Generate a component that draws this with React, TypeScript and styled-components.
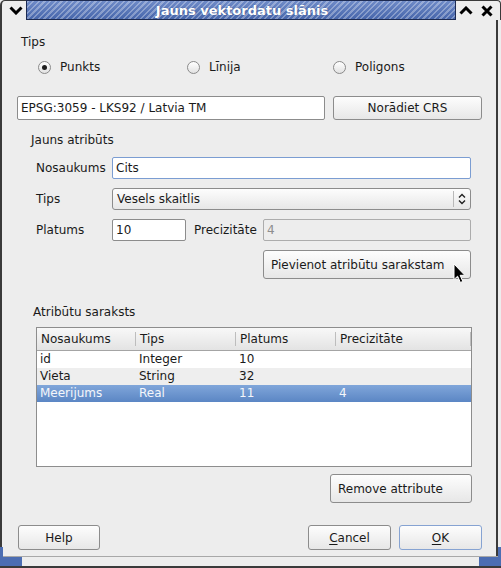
import styled, { createGlobalStyle } from "styled-components";

const GlobalStyle = createGlobalStyle`
  html, body {
    margin: 0;
    padding: 0;
    background: #ededed;
  }
  body {
    font-family: "DejaVu Sans", "Liberation Sans", sans-serif;
    font-size: 12px;
    color: #1a1a1a;
  }
  * {
    box-sizing: border-box;
  }
`;

const columns = ["Nosaukums", "Tips", "Platums", "Precizitāte"];

const attributes = [
  { name: "id", type: "Integer", width: "10", precision: "" },
  { name: "Vieta", type: "String", width: "32", precision: "" },
  { name: "Meerijums", type: "Real", width: "11", precision: "4" },
];

function App() {
  return (
    <>
      <GlobalStyle />
      <Window>
        <TitleBar>
          <MenuButton>
            <svg width="14" height="9" viewBox="0 0 14 9">
              <polyline points="1.5,1.5 7,7 12.5,1.5" fill="none" stroke="#000" strokeWidth="3" />
            </svg>
          </MenuButton>
          <TitleArea>Jauns vektordatu slānis</TitleArea>
          <TitleControls>
            <svg width="14" height="9" viewBox="0 0 14 9">
              <polyline points="1.5,7.5 7,2 12.5,7.5" fill="none" stroke="#000" strokeWidth="3" />
            </svg>
            <svg width="12" height="12" viewBox="0 0 12 12">
              <path d="M1.5 1.5 L10.5 10.5 M10.5 1.5 L1.5 10.5" stroke="#000" strokeWidth="3" />
            </svg>
          </TitleControls>
        </TitleBar>

        <Body>
          <SectionLabel $indent={4}>Tips</SectionLabel>
          <RadioRow>
            <RadioOption>
              <Radio $checked />
              Punkts
            </RadioOption>
            <RadioOption>
              <Radio />
              Līnija
            </RadioOption>
            <RadioOption>
              <Radio />
              Poligons
            </RadioOption>
          </RadioRow>

          <CrsRow>
            <CrsField readOnly value="EPSG:3059 - LKS92 / Latvia TM" />
            <Button $width={149}>Norādiet CRS</Button>
          </CrsRow>

          <Group>
            <SectionLabel $indent={14}>Jauns atribūts</SectionLabel>
            <Form>
              <FormRow>
                <FieldLabel>Nosaukums</FieldLabel>
                <TextInput readOnly value="Cits" $focused />
              </FormRow>
              <FormRow>
                <FieldLabel>Tips</FieldLabel>
                <Combo>
                  <ComboText>Vesels skaitlis</ComboText>
                  <ComboArrow>
                    <svg width="8" height="12" viewBox="0 0 8 12">
                      <polyline points="1,4.5 4,1.5 7,4.5" fill="none" stroke="#222" strokeWidth="1.4" />
                      <polyline points="1,7.5 4,10.5 7,7.5" fill="none" stroke="#222" strokeWidth="1.4" />
                    </svg>
                  </ComboArrow>
                </Combo>
              </FormRow>
              <FormRow>
                <FieldLabel>Platums</FieldLabel>
                <TextInput readOnly value="10" $width={74} />
                <InlineLabel>Precizitāte</InlineLabel>
                <TextInput readOnly value="4" disabled />
              </FormRow>
              <ActionRow>
                <Button $align="left" $width={208} $height={29}>
                  Pievienot atribūtu sarakstam
                </Button>
                <Cursor width="13" height="21" viewBox="0 0 13 21">
                  <path
                    d="M1 1 L1 16.5 L4.6 13.2 L7.4 19.5 L9.8 18.4 L7.1 12.3 L11.8 12.3 Z"
                    fill="#000"
                    stroke="#fff"
                    strokeWidth="1"
                    strokeLinejoin="round"
                  />
                </Cursor>
              </ActionRow>
            </Form>
          </Group>

          <Group $top={26}>
            <SectionLabel $indent={16}>Atribūtu saraksts</SectionLabel>
            <Tree>
              <TreeHeader>
                {columns.map((c) => (
                  <HeaderCell key={c}>{c}</HeaderCell>
                ))}
              </TreeHeader>
              {attributes.map((a, i) => (
                <TreeRow key={a.name} $alt={i % 2 === 1} $selected={i === 2}>
                  <Cell>{a.name}</Cell>
                  <Cell>{a.type}</Cell>
                  <Cell>{a.width}</Cell>
                  <Cell>{a.precision}</Cell>
                </TreeRow>
              ))}
            </Tree>
            <RemoveRow>
              <Button $align="left" $width={142} $height={29}>
                Remove attribute
              </Button>
            </RemoveRow>
          </Group>

          <DialogButtons>
            <Button $width={82}>Help</Button>
            <Spacer />
            <Button $width={83}>
              <u>C</u>ancel
            </Button>
            <Button $width={83} $focused>
              <u>O</u>K
            </Button>
          </DialogButtons>
        </Body>

        <BottomFrame>
          <Corner $side="left" />
          <Corner $side="right" />
        </BottomFrame>
      </Window>
    </>
  );
}

export default App;

const Window = styled.div`
  width: 501px;
  height: 568px;
  display: flex;
  flex-direction: column;
  background: #ededed;
  overflow: hidden;
`;

const TitleBar = styled.div`
  height: 20px;
  display: flex;
  flex-shrink: 0;
`;

const MenuButton = styled.div`
  width: 26px;
  display: flex;
  align-items: center;
  justify-content: center;
  padding-left: 4px;
  border-left: 2px solid #3a3a3a;
  border-top: 1px solid #3a3a3a;
  border-top-left-radius: 5px;
  background: #ededed;
`;

const TitleArea = styled.div`
  flex: 1;
  display: flex;
  align-items: center;
  justify-content: center;
  border: 1px solid #1d2b52;
  background: repeating-linear-gradient(
      135deg,
      rgba(255, 255, 255, 0.3) 0 1.6px,
      transparent 1.6px 4px
    ),
    linear-gradient(#6f8bc8, #4766ab);
  color: #fff;
  font-weight: bold;
  font-size: 13px;
  text-shadow: 0 0 1px rgba(20, 40, 90, 0.6);
  padding-left: 2px;
`;

const TitleControls = styled.div`
  width: 45px;
  display: flex;
  align-items: center;
  gap: 8px;
  padding-left: 3px;
  border-top: 1px solid #3a3a3a;
  border-right: 1px solid #3a3a3a;
  border-top-right-radius: 4px;
  background: #ededed;
`;

const Body = styled.div`
  flex: 1;
  display: flex;
  flex-direction: column;
  margin-right: 3px;
  padding: 15px 14px 0 15px;
  border-left: 2px solid #3a3a3a;
  border-right: 2px solid #3a3a3a;
`;

const SectionLabel = styled.div<{ $indent: number }>`
  height: 14px;
  line-height: 14px;
  margin-left: ${(p) => p.$indent}px;
`;

const RadioRow = styled.div`
  display: grid;
  grid-template-columns: 149px 146px 1fr;
  height: 16px;
  margin: 10px 0 0 21px;
`;

const RadioOption = styled.label`
  display: flex;
  align-items: center;
  gap: 9px;
  line-height: 16px;
`;

const Radio = styled.span<{ $checked?: boolean }>`
  width: 13px;
  height: 13px;
  border-radius: 50%;
  border: 1px solid #8a8a8a;
  background: linear-gradient(#ffffff, #e2e2e2);
  display: inline-flex;
  align-items: center;
  justify-content: center;

  &::after {
    content: "";
    width: 5px;
    height: 5px;
    border-radius: 50%;
    background: ${(p) => (p.$checked ? "#1e1e1e" : "transparent")};
  }
`;

const CrsRow = styled.div`
  display: flex;
  gap: 8px;
  height: 24px;
  margin-top: 21px;
`;

const fieldBase = `
  font: inherit;
  color: #1a1a1a;
  height: 100%;
  border: 1px solid #8c8c8c;
  border-radius: 2px;
  background: #fff;
  padding: 0 3px;
  outline: none;
`;

const CrsField = styled.input`
  ${fieldBase}
  width: 308px;
  padding-left: 3px;
`;

const Button = styled.button<{
  $focused?: boolean;
  $align?: "left" | "center";
  $width?: number;
  $height?: number;
}>`
  font: inherit;
  color: #1a1a1a;
  width: ${(p) => (p.$width ? `${p.$width}px` : "auto")};
  height: ${(p) => (p.$height ? `${p.$height}px` : "100%")};
  border: 1px solid ${(p) => (p.$focused ? "#86a3d2" : "#8c8c8c")};
  border-radius: 3px;
  background: linear-gradient(#fdfdfd, #e7e7e7);
  padding: 0 7px;
  text-align: ${(p) => p.$align ?? "center"};
  flex-shrink: 0;

  u {
    text-decoration-thickness: 1px;
    text-underline-offset: 2px;
  }
`;

const Group = styled.div<{ $top?: number }>`
  display: flex;
  flex-direction: column;
  margin: ${(p) => p.$top ?? 13}px 11px 0 0;
`;

const Form = styled.div`
  display: flex;
  flex-direction: column;
  gap: 9px;
  margin: 10px 0 0 19px;
`;

const FormRow = styled.div`
  display: flex;
  align-items: center;
  height: 22px;
`;

const FieldLabel = styled.span`
  width: 76px;
  flex-shrink: 0;
`;

const InlineLabel = styled.span`
  width: 77px;
  padding-left: 8px;
  flex-shrink: 0;
`;

const TextInput = styled.input<{ $focused?: boolean; $width?: number }>`
  ${fieldBase}
  width: ${(p) => (p.$width ? `${p.$width}px` : "auto")};
  flex: ${(p) => (p.$width ? "0 0 auto" : "1")};
  min-width: 0;
  border-color: ${(p) => (p.$focused ? "#7b9dd2" : "#8c8c8c")};

  &:disabled {
    background: #ededed;
    border-color: #acacac;
    color: #8e8e8e;
  }
`;

const Combo = styled.div`
  flex: 1;
  height: 100%;
  display: flex;
  align-items: center;
  border: 1px solid #8c8c8c;
  border-radius: 3px;
  background: linear-gradient(#fdfdfd, #e7e7e7);
`;

const ComboText = styled.span`
  flex: 1;
  padding-left: 4px;
`;

const ComboArrow = styled.span`
  width: 16px;
  height: 16px;
  display: flex;
  align-items: center;
  justify-content: center;
  border-left: 1px solid #b9b9b9;
  margin-right: 1px;
  padding-left: 1px;
`;

const ActionRow = styled.div`
  position: relative;
  display: flex;
  padding-left: 227px;
`;

const Cursor = styled.svg`
  position: absolute;
  left: 417px;
  top: 13px;
`;

const Tree = styled.div`
  margin: 8px -1px 0 19px;
  height: 140px;
  border: 1px solid #8d8d8d;
  background: #fff;
`;

const gridCols = `
  display: grid;
  grid-template-columns: 99px 100px 100px 1fr;
`;

const TreeHeader = styled.div`
  ${gridCols}
  height: 23px;
  border-bottom: 1px solid #a4a4a4;
  background: linear-gradient(#f8f8f8, #e3e3e3);
`;

const HeaderCell = styled.div`
  position: relative;
  display: flex;
  align-items: center;
  padding-left: 4px;

  &::after {
    content: "";
    position: absolute;
    right: 0;
    top: 4px;
    bottom: 4px;
    width: 1px;
    background: #bdbdbd;
  }
`;

const TreeRow = styled.div<{ $alt?: boolean; $selected?: boolean }>`
  ${gridCols}
  height: 17px;
  line-height: 17px;
  background: ${(p) =>
    p.$selected
      ? "linear-gradient(#80a6da, #5b86c4)"
      : p.$alt
      ? "#eeeeee"
      : "#ffffff"};
  color: ${(p) => (p.$selected ? "#f4f6fa" : "#1a1a1a")};
`;

const Cell = styled.div`
  padding-left: 3px;
  white-space: nowrap;
`;

const RemoveRow = styled.div`
  display: flex;
  justify-content: flex-end;
  margin: 7px -1px 0 0;
`;

const DialogButtons = styled.div`
  display: flex;
  gap: 8px;
  height: 25px;
  margin: 22px 0 0 1px;
`;

const Spacer = styled.div`
  flex: 1;
`;

const BottomFrame = styled.div`
  height: 12px;
  flex-shrink: 0;
  display: flex;
  justify-content: space-between;
  border-top: 1px solid #a8a8a8;
  border-bottom: 2px solid #3a3a3a;
  background: #ededed;
`;

const Corner = styled.div<{ $side: "left" | "right" }>`
  position: relative;
  width: 22px;
  background: #4c6db2;

  &::before {
    content: "";
    position: absolute;
    ${(p) => p.$side}: 0;
    bottom: 100%;
    width: 3px;
    height: 10px;
    background: #4c6db2;
  }
`;
